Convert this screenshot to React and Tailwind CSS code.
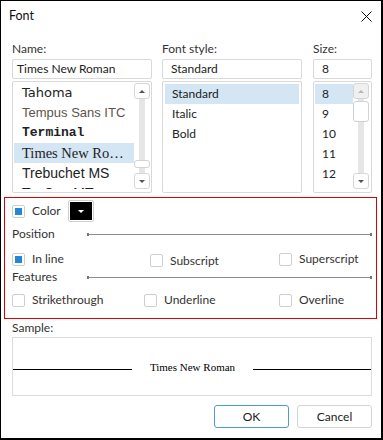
import React from 'react';

const ui = "[font-family:Lato,'Liberation_Sans',sans-serif]";

function Check({ checked }) {
  return (
    <span className="w-[13px] h-[13px] shrink-0 border border-[#cfcfcf] rounded-[2px] bg-white flex items-center justify-center">
      {checked && <span className="w-[7px] h-[7px] bg-[#2287d4]" />}
    </span>
  );
}

function CheckItem({ checked, label, width, offset = '' }) {
  return (
    <div className={`flex items-center gap-[7px] ${width} ${offset}`}>
      <Check checked={checked} />
      <span>{label}</span>
    </div>
  );
}

function Rule({ label }) {
  return (
    <div className="flex items-center h-[14px]">
      <span className="w-[75px] shrink-0">{label}</span>
      <div className="flex-1 flex items-center">
        <span className="w-[2px] h-[3px] bg-[#777]" />
        <span className="flex-1 h-px bg-[#8c8c8c]" />
        <span className="w-[2px] h-[3px] bg-[#777]" />
      </div>
    </div>
  );
}

function Scrollbar({ thumbTop, thumbH, dim }) {
  return (
    <div className="w-[16px] shrink-0 flex flex-col h-full">
      <div className={`h-[16px] border border-[#d6d6d6] rounded-[3px] flex items-center justify-center ${dim ? 'bg-[#f0f0f0]' : 'bg-white'}`}>
        <span className={`w-0 h-0 border-x-[3px] border-x-transparent border-b-[3px] ${dim ? 'border-b-[#b5b5b5]' : 'border-b-[#555]'}`} />
      </div>
      <div className="flex-1 relative flex justify-center">
        <div className="w-[6px] h-full bg-[#e6e6e6]" />
        <div
          className="absolute left-0 w-[16px] bg-white border border-[#d2d2d2] rounded-[3px]"
          style={{ top: thumbTop, height: thumbH }}
        />
      </div>
      <div className="h-[16px] border border-[#d6d6d6] rounded-[3px] bg-white flex items-center justify-center">
        <span className="w-0 h-0 border-x-[3px] border-x-transparent border-t-[3px] border-t-[#555]" />
      </div>
    </div>
  );
}

const fonts = [
  { t: 'Tahoma', cls: "[font-family:'DejaVu_Sans',sans-serif] text-[13px] text-[#222]" },
  { t: 'Tempus Sans ITC', cls: "[font-family:'Liberation_Sans',sans-serif] text-[13px] text-[#5e544b]" },
  { t: 'Terminal', cls: "[font-family:'Liberation_Mono',monospace] font-bold text-[13px] text-[#222]" },
  { t: 'Times New Roman', cls: "[font-family:'Liberation_Serif',serif] text-[14.5px] text-[#222]", sel: true },
  { t: 'Trebuchet MS', cls: "[font-family:'Liberation_Sans',sans-serif] text-[14px] text-[#222]" },
  { t: 'Tw Cen MT', cls: "[font-family:'Liberation_Sans',sans-serif] text-[14px] text-[#222]" },
];

const styles = ['Standard', 'Italic', 'Bold'];
const sizes = ['8', '9', '10', '11', '12', '14'];

export default function App() {
  return (
    <div className={`w-[383px] h-[440px] bg-white border-l border-t border-r-2 border-b-2 border-black text-[12px] text-[#333] ${ui}`}>
      {/* title bar */}
      <div className="h-[30px] flex items-center justify-between pl-[8px] pr-[9px]">
        <span className="text-[12.5px] text-[#111]">Font</span>
        <svg width="11" height="11" viewBox="0 0 11 11">
          <path d="M0.5 0.5 L10.5 10.5 M10.5 0.5 L0.5 10.5" stroke="#111" strokeWidth="1" />
        </svg>
      </div>

      <div className="pl-[11px]">
        {/* name / style / size */}
        <div className="flex mt-[11px]">
          <div className="w-[140px]">
            <div className="h-[14px] leading-[14px]">Name:</div>
            <div className="mt-[3px] h-[20px] border border-[#d9d9d9] rounded-[2px] pl-[4px] leading-[18px] text-[#222]">Times New Roman</div>
            <div className="mt-[2px] h-[112px] border border-[#d9d9d9] rounded-[2px] flex pl-px pt-px pb-[3px] pr-px overflow-hidden">
              <div className="flex-1 min-w-0 overflow-hidden">
                {fonts.map((f) => (
                  <div
                    key={f.t}
                    className={`h-[20px] leading-[20px] pl-[8px] pr-[1px] whitespace-nowrap overflow-hidden text-ellipsis ${f.cls} ${f.sel ? 'bg-[#d4e6f4]' : ''}`}
                  >
                    {f.t}
                  </div>
                ))}
              </div>
              <Scrollbar thumbTop={61} thumbH={8} />
            </div>
          </div>

          <div className="w-[140px] ml-[10px]">
            <div className="h-[14px] leading-[14px]">Font style:</div>
            <div className="mt-[3px] h-[20px] border border-[#d9d9d9] rounded-[2px] pl-[8px] leading-[18px] text-[#222]">Standard</div>
            <div className="mt-[2px] h-[112px] border border-[#d9d9d9] rounded-[2px] p-[2px]">
              {styles.map((s, i) => (
                <div key={s} className={`h-[20px] leading-[19px] pl-[7px] text-[#222] ${i === 0 ? 'bg-[#d4e6f4]' : ''}`}>
                  {s}
                </div>
              ))}
            </div>
          </div>

          <div className="w-[59px] ml-[11px]">
            <div className="h-[14px] leading-[14px]">Size:</div>
            <div className="mt-[3px] h-[20px] border border-[#d9d9d9] rounded-[2px] pl-[8px] leading-[18px] text-[#222]">8</div>
            <div className="mt-[2px] h-[112px] border border-[#d9d9d9] rounded-[2px] flex pl-px pt-px pb-[3px] pr-[2px] overflow-hidden">
              <div className="flex-1 min-w-0 overflow-hidden pt-px">
                {sizes.map((s, i) => (
                  <div key={s} className={`h-[20px] leading-[19px] pl-[7px] text-[#222] ${i === 0 ? 'bg-[#d4e6f4]' : ''}`}>
                    {s}
                  </div>
                ))}
              </div>
              <Scrollbar thumbTop={2} thumbH={21} dim />
            </div>
          </div>
        </div>
      </div>

      {/* options */}
      <div className="ml-[3px] mt-[4px] w-[373px] h-[122px] border border-[#e00000] pl-[7px] pr-[4px]">
        <div className="mt-[2px] h-[22px] flex items-center">
          <Check checked />
          <span className="ml-[7px] w-[36px]">Color</span>
          <div className="w-[26px] h-[22px] border border-[#cfcfcf] rounded-[2px] p-px bg-white">
            <div className="w-full h-full bg-black flex items-center justify-center">
              <span className="w-0 h-0 border-x-[3px] border-x-transparent border-t-[3px] border-t-white" />
            </div>
          </div>
        </div>
        <div className="mt-[5px]">
          <Rule label="Position" />
        </div>
        <div className="mt-[11px] h-[14px] flex items-center">
          <CheckItem checked label="In line" width="w-[138px]" />
          <CheckItem label="Subscript" width="w-[129px]" offset="mt-[3px]" />
          <CheckItem label="Superscript" width="w-[80px]" />
        </div>
        <div className="mt-[4px]">
          <Rule label="Features" />
        </div>
        <div className="mt-[9px] h-[14px] flex items-center">
          <CheckItem label="Strikethrough" width="w-[132px]" />
          <CheckItem label="Underline" width="w-[135px]" />
          <CheckItem label="Overline" width="w-[80px]" />
        </div>
      </div>

      <div className="pl-[11px]">
        <div className="mt-[2px] h-[14px] leading-[14px]">Sample:</div>
        <div className="mt-[2px] w-[360px] h-[59px] border border-[#dcdcdc] pt-[22px]">
          <div className="flex h-[14px]">
            <span className="w-[119px] h-px bg-black mt-[9px]" />
            <span className="w-[121px] text-center leading-[14px] text-[11px] text-black [font-family:'Liberation_Serif',serif]">
              Times New Roman
            </span>
            <span className="flex-1 h-px bg-black mt-[9px]" />
          </div>
        </div>
        <div className="mt-[9px] w-[360px] flex justify-end gap-[8px]">
          <button className="w-[75px] h-[23px] border border-[#4a9bd6] rounded-[3px] bg-white text-[#222]">OK</button>
          <button className="w-[75px] h-[23px] border border-[#d4d4d4] rounded-[3px] bg-white text-[#222]">Cancel</button>
        </div>
      </div>
    </div>
  );
}
